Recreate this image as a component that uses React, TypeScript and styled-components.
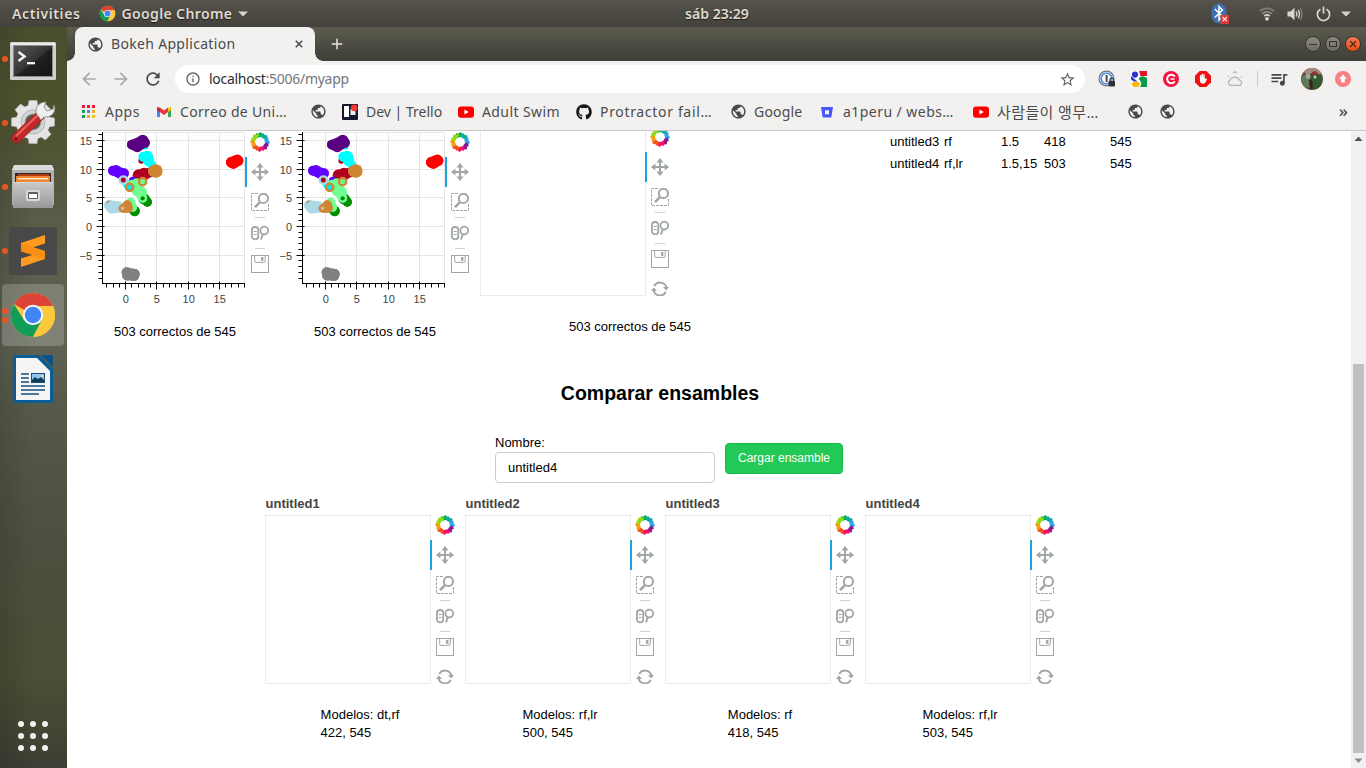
import React from "react";
import styled, { createGlobalStyle } from "styled-components";
import {
  MdAdd,
  MdArrowBack,
  MdArrowForward,
  MdInfoOutline,
  MdPublic,
  MdQueueMusic,
  MdRefresh,
  MdStarBorder,
} from "react-icons/md";
import { FaGithub } from "react-icons/fa";

const uiFont = `"Noto Sans", "Noto Sans CJK KR", sans-serif`;
const pageFont = `"Liberation Sans", Arial, sans-serif`;

const GlobalStyle = createGlobalStyle`
  * { box-sizing: border-box; }
  html, body { margin: 0; padding: 0; overflow: hidden; background: #fff; }
  svg { display: block; flex: none; }
`;

/* ---------- desktop shell ---------- */

const Desktop = styled.div`
  width: 1366px;
  height: 768px;
  display: flex;
  flex-direction: column;
  overflow: hidden;
  font-family: ${uiFont};
`;

const SystemBar = styled.header`
  height: 27px;
  flex: none;
  display: grid;
  grid-template-columns: 673px 1fr auto;
  align-items: center;
  background: linear-gradient(#57534b, #42413b);
  color: #dfdbd2;
  text-shadow: 0 1px 1px rgba(0, 0, 0, 0.6);
`;

const SystemGroup = styled.div`
  display: flex;
  align-items: center;
  height: 27px;
`;

const SystemText = styled.span<{ $left?: number; $space?: number }>`
  font-size: 14px;
  font-weight: 600;
  line-height: 26px;
  white-space: pre;
  margin-left: ${(p) => p.$left ?? 0}px;
  letter-spacing: ${(p) => p.$space ?? 0}px;
`;

const SystemIcon = styled.span<{ $left: number }>`
  margin-left: ${(p) => p.$left}px;
`;

const Workspace = styled.div`
  flex: 1;
  min-height: 0;
  display: flex;
`;

const Dock = styled.nav`
  width: 67px;
  flex: none;
  display: flex;
  flex-direction: column;
  justify-content: space-between;
  background:
    radial-gradient(90px 130px at 70% 8%, rgba(72, 80, 28, 0.5), transparent),
    linear-gradient(90deg, rgba(0, 0, 0, 0.12), transparent 50%),
    linear-gradient(#4a4d34 0%, #515439 12%, #5b5e4b 30%, #5f6353 42%, #55594a 52%, #4b5040 70%, #4a4e34 88%, #3c4034 100%);
`;

const DockList = styled.div`
  display: flex;
  flex-direction: column;
`;

const DockItem = styled.div<{ $active?: boolean }>`
  height: 62px;
  margin: 1px 3px 1px 2px;
  display: flex;
  align-items: center;
  border-radius: 4px;
  background: ${(p) => (p.$active ? "rgba(255,255,255,0.2)" : "transparent")};
`;

const Dots = styled.span`
  width: 7px;
  display: flex;
  flex-direction: column;
  gap: 3px;
`;

const Dot = styled.i`
  width: 6px;
  height: 6px;
  border-radius: 50%;
  background: #ea5420;
`;

const AppGrid = styled.div`
  display: grid;
  grid-template-columns: repeat(3, 6px);
  gap: 6px;
  padding: 0 0 17px 18px;
`;

const AppGridDot = styled.i`
  width: 6px;
  height: 6px;
  border-radius: 50%;
  background: #f1f1ef;
`;

/* ---------- browser ---------- */

const Browser = styled.main`
  flex: 1;
  min-width: 0;
  display: flex;
  flex-direction: column;
`;

const TabStrip = styled.div`
  height: 34px;
  flex: none;
  display: flex;
  align-items: center;
  padding-left: 8px;
  background: linear-gradient(#5c5b4e, #3f3e38);
`;

const Tab = styled.div`
  position: relative;
  width: 240px;
  height: 34px;
  display: flex;
  align-items: center;
  padding: 0 12px 0 12px;
  border-radius: 8px 8px 0 0;
  background: #f2f1f0;
  color: #494a4c;

  &::before,
  &::after {
    content: "";
    position: absolute;
    bottom: 0;
    width: 8px;
    height: 8px;
  }
  &::before {
    left: -8px;
    background: radial-gradient(circle at 0 0, transparent 7.5px, #f2f1f0 8px);
  }
  &::after {
    right: -8px;
    background: radial-gradient(circle at 100% 0, transparent 7.5px, #f2f1f0 8px);
  }
`;

const TabTitle = styled.span`
  flex: 1;
  margin: -2px 0 0 7px;
  font-size: 14px;
  letter-spacing: 0.32px;
  white-space: nowrap;
`;

const NewTab = styled.div`
  margin-left: 13px;
  color: #e6e4de;
`;

const WindowButtons = styled.div`
  margin-left: auto;
  padding-right: 5px;
  display: flex;
  gap: 4px;
`;

const WindowButton = styled.span<{ $close?: boolean }>`
  width: 16px;
  height: 16px;
  border-radius: 50%;
  display: grid;
  place-items: center;
  color: #3c3b37;
  border: 1px solid #35342f;
  background: ${(p) => (p.$close ? "linear-gradient(#f67c52, #e84a12)" : "linear-gradient(#8b897f, #6e6d64)")};
`;

const Toolbar = styled.div`
  height: 36px;
  flex: none;
  display: flex;
  align-items: center;
  background: #f2f1f0;
  padding-left: 12px;
`;

const NavButtons = styled.div`
  width: 96px;
  display: flex;
  gap: 12px;
`;

const Omnibox = styled.div`
  width: 910px;
  height: 28px;
  border-radius: 14px;
  background: #fff;
  display: flex;
  align-items: center;
  padding: 0 9px 0 10px;
  color: #5f6368;
`;

const Url = styled.span`
  flex: 1;
  margin-left: 8px;
  font-size: 14px;
  line-height: 28px;
  letter-spacing: -0.28px;
  color: #75777a;
`;

const UrlHost = styled.span`
  color: #2c2d30;
`;

const Extensions = styled.div`
  display: flex;
  align-items: center;
  gap: 16px;
  margin-left: 14px;
`;

const ExtensionSlot = styled.span`
  width: 16px;
  display: flex;
  justify-content: center;
`;

const BrowserMenu = styled.div`
  display: flex;
  align-items: center;
  gap: 12px;
  margin-left: -2px;
`;

const Separator = styled.i`
  width: 1px;
  height: 16px;
  margin-right: -1px;
  background: #cbcac9;
`;

const Bookmarks = styled.div`
  height: 34px;
  flex: none;
  display: flex;
  align-items: center;
  padding: 0 0 4px 14px;
  background: #f2f1f0;
  border-bottom: 1px solid #cbcac9;
  color: #4b4c4e;
`;

const Bookmark = styled.div<{ $width: number }>`
  width: ${(p) => p.$width}px;
  flex: none;
  display: flex;
  align-items: center;
  gap: 8px;
`;

const BookmarkIcon = styled.span`
  width: 16px;
  display: flex;
  justify-content: center;
`;

const BookmarkLabel = styled.span<{ $space: number; $size: number }>`
  font-size: ${(p) => p.$size}px;
  line-height: 20px;
  white-space: nowrap;
  letter-spacing: ${(p) => p.$space}px;
`;

const Overflow = styled.span`
  margin-left: auto;
  margin-right: 18px;
  font-size: 17px;
  font-weight: 500;
  line-height: 18px;
  padding-bottom: 2px;
`;

/* ---------- page ---------- */

const Viewport = styled.div`
  flex: 1;
  min-height: 0;
  display: flex;
  background: #fff;
`;

const Page = styled.div`
  flex: 1;
  min-width: 0;
  overflow: hidden;
  padding-left: 8px;
  font-family: ${pageFont};
  font-size: 13px;
  line-height: 18px;
  color: #000;
`;

const Scrollbar = styled.div`
  width: 15px;
  flex: none;
  display: flex;
  flex-direction: column;
  align-items: center;
  background: #f1f1f1;
`;

const ScrollArrow = styled.svg`
  width: 15px;
  height: 15px;
`;

const ScrollThumb = styled.i`
  width: 11px;
  height: 389px;
  margin: auto 0 0;
  background: #c1c1c1;
`;

const ResultsRow = styled.section`
  height: 242px;
  display: flex;
`;

const PlotColumn = styled.div<{ $width: number }>`
  width: ${(p) => p.$width}px;
  display: flex;
  flex-direction: column;
`;

const PlotBody = styled.div<{ $top: number; $left: number }>`
  display: flex;
  margin: ${(p) => p.$top}px 0 0 ${(p) => p.$left}px;
`;

const EmptyFrame = styled.div`
  width: 166px;
  height: 169px;
  margin-right: -1px;
  border: 1px solid #ebebeb;
`;

const PlotTools = styled.div<{ $height: number; $top: number }>`
  position: relative;
  width: 30px;
  height: ${(p) => p.$height}px;
  margin-top: ${(p) => p.$top}px;
  overflow: hidden;
  display: flex;
  flex-direction: column;
  align-items: center;
`;

const LogoSlot = styled.div`
  height: 25px;
  flex: none;
`;

const Tool = styled.div<{ $active?: boolean }>`
  width: 30px;
  height: 30px;
  flex: none;
  display: grid;
  place-items: center;
  padding-right: 2px;
  border-left: 2px solid ${(p) => (p.$active ? "#1ca4e0" : "transparent")};
`;

const ToolDivider = styled.i`
  width: 10px;
  height: 1px;
  flex: none;
  background: #cfd1d2;
`;

const Caption = styled.div<{ $top: number }>`
  margin: ${(p) => p.$top}px auto 0;
`;

const Table = styled.div`
  margin: 1px 0 0 105px;
  display: grid;
  grid-template-columns: 54px 57px 43px 66px 30px;
  grid-auto-rows: 22px;
  align-self: start;
  line-height: 20px;
`;

const Heading = styled.h2`
  width: 1170px;
  margin: 0;
  padding-top: 9px;
  text-align: center;
  font-size: 19.5px;
  line-height: 22px;
  font-weight: 700;
`;

const Form = styled.form`
  display: flex;
  margin: 30px 0 0 420px;
  height: 50px;
`;

const Field = styled.label`
  width: 220px;
  line-height: 17px;
`;

const Input = styled.input`
  display: block;
  width: 220px;
  height: 31px;
  margin-top: 1px;
  padding: 0 12px;
  border: 1px solid #ccc;
  border-radius: 4px;
  outline: none;
  background: #fff;
  color: #000;
  font: 13px ${pageFont};
`;

const LoadButton = styled.button`
  width: 118px;
  height: 31px;
  margin: 9px 0 0 10px;
  padding: 0 0 1px;
  border: 1px solid #12bb48;
  border-radius: 4px;
  background: #22c957;
  color: #fff;
  font: 12px ${pageFont};
`;

const CompareRow = styled.section`
  display: flex;
  margin-left: 185px;
  padding-top: 11px;
`;

const PlotTitle = styled.h3`
  margin: 0 0 2px 5.5px;
  font-size: 13px;
  line-height: 18px;
  font-weight: 700;
  color: #444;
`;

/* ---------- drawings ---------- */

const ChromeLogo = ({ size }: { size: number }) => (
  <svg width={size} height={size} viewBox="0 0 48 48">
    <circle cx="24" cy="24" r="22" fill="#fcc93c" />
    <path d="M24 24 L4.9 13 A22 22 0 0 1 43.1 13 L44 15 H24 Z" fill="#dc4437" />
    <path d="M4.9 13 A22 22 0 0 0 24 46 L33 29 L24 24 L15 29 Z" fill="#119d58" />
    <path d="M24 46 L33.2 28.5 L35 15 H44 A22 22 0 0 1 24 46Z" fill="#fcc93c" />
    <circle cx="24" cy="24" r="10.2" fill="#f4f6f8" />
    <circle cx="24" cy="24" r="8.2" fill="#4285f4" />
  </svg>
);

const TerminalIcon = () => (
  <svg width="48" height="48">
    <defs>
      <linearGradient id="term" x1="0" y1="0" x2="1" y2="1">
        <stop offset="0" stopColor="#5a5a5a" />
        <stop offset="0.5" stopColor="#343434" />
        <stop offset="0.55" stopColor="#1f1f1f" />
        <stop offset="1" stopColor="#151515" />
      </linearGradient>
    </defs>
    <rect x="1" y="7" width="46" height="38" rx="1.5" fill="#cfcfcf" />
    <rect x="2" y="8" width="44" height="3" fill="#ececec" />
    <rect x="4" y="10" width="40" height="32" fill="#8d8d8d" />
    <rect x="5" y="11" width="38" height="30" fill="url(#term)" />
    <path d="M9.5 17 L15.5 21.5 L9.5 26" fill="none" stroke="#f2f2f2" strokeWidth="2.6" />
    <path d="M18 28.2 h8" stroke="#fff" strokeWidth="2.2" />
  </svg>
);

const SettingsIcon = () => (
  <svg width="48" height="48">
    <g fill="#e4e4e4" stroke="#b9b9b9" strokeWidth="0.6">
      {[0, 45, 90, 135, 180, 225, 270, 315].map((a) => (
        <path key={a} d="M19 8 L20 1.5 H28 L29 8 Z" transform={`rotate(${a} 24 23)`} />
      ))}
    </g>
    <circle cx="24" cy="23" r="17.2" fill="#e4e4e4" />
    <circle cx="24" cy="23" r="12" fill="#d3d3d3" stroke="#b5b5b5" />
    <circle cx="24" cy="23" r="8" fill="#5b5d4c" stroke="#a5a5a5" />
    <path d="M3 37 L28 13 L35 19 L10 43 A4.8 4.8 0 0 1 3 37Z" fill="#c62828" stroke="#8d1919" strokeWidth="0.8" />
    <path d="M7 37 L29 16" stroke="#e4635c" strokeWidth="2" />
    <path d="M27 14 C26 7 31 3 37 3 L35 8 L38 12 L44 10 L45 6 C48 13 42 19 35 18 L32 21Z" fill="#efefef" stroke="#8b8b8b" strokeWidth="0.9" />
    <circle cx="7" cy="40" r="1.5" fill="#75110f" />
  </svg>
);

const FilesIcon = () => (
  <svg width="48" height="48">
    <defs>
      <linearGradient id="cab" x1="0" y1="0" x2="0" y2="1">
        <stop offset="0" stopColor="#c9c9c9" />
        <stop offset="1" stopColor="#989898" />
      </linearGradient>
    </defs>
    <path d="M5 2 H43 L45 7 V42 H3 V7Z" fill="#b3b3b3" />
    <path d="M5 2 H43 L45 7 H3Z" fill="#dcdcdc" />
    <rect x="6" y="10" width="36" height="10" fill="#2f2b28" />
    <rect x="9" y="11" width="31" height="3" fill="#b53a12" />
    <rect x="7" y="13" width="34" height="6" fill="#ee8734" />
    <rect x="9" y="15" width="30" height="1.4" fill="#ffe9cf" />
    <path d="M4 19 H44 V45 H4Z" fill="url(#cab)" />
    <path d="M4 19.5 H44" stroke="#d8d8d8" />
    <rect x="17" y="27" width="14" height="11" rx="2" fill="#d9d9d9" />
    <rect x="19" y="29" width="10" height="7" rx="1" fill="#5e5e5e" />
    <rect x="20" y="31" width="8" height="4" fill="#fff" />
  </svg>
);

const SublimeIcon = () => (
  <svg width="48" height="48">
    <rect width="48" height="48" rx="2" fill="#484848" />
    <path d="M12 16 L36 8 V16.5 L12 24Z" fill="#ff9b20" />
    <path d="M12 31.5 L36 24 V32 L12 40Z" fill="#ff9b20" />
    <path d="M12 16 L36 24 V32 L12 24.5Z" fill="#f99015" />
  </svg>
);

const WriterIcon = () => (
  <svg width="48" height="48">
    <path d="M6 0 H30 L44 14 V46 a2 2 0 0 1 -2 2 H6 a2 2 0 0 1 -2 -2 V2 a2 2 0 0 1 2 -2Z" fill="#0b5e95" />
    <path d="M7 3 H28 L41 16 V45 H7Z" fill="#f5f5f5" />
    <path d="M32 0 H42 a2 2 0 0 1 2 2 V12Z" fill="#08538a" />
    <g stroke="#14507c" strokeWidth="1.7">
      <path d="M12 19 h8 M12 23 h8 M12 27 h8 M12 31 h24 M12 35 h24 M12 39 h18" />
    </g>
    <rect x="22" y="18" width="14" height="10" fill="#14507c" />
    <rect x="23" y="19" width="12" height="8" fill="#8ec7ea" />
    <path d="M23 27 V25 L26 22 L29 24 L32 22 L35 25 V27Z" fill="#123c56" />
    <circle cx="33" cy="21" r="1.2" fill="#ffdf6b" />
  </svg>
);

const Triangle = () => (
  <svg width="10" height="6">
    <path d="M0 0.5 H10 L5 5.5Z" fill="#d6d3cb" />
  </svg>
);

const TabCloseIcon = () => (
  <svg width="8" height="8">
    <path d="M0.8 0.8 L7.2 7.2 M7.2 0.8 L0.8 7.2" stroke="#494a4c" strokeWidth="1.6" />
  </svg>
);

const BluetoothIcon = () => (
  <svg width="18" height="22">
    <rect x="0.5" y="0.5" width="15" height="20" rx="7.5" fill="#3c6fb0" />
    <path d="M3.8 6 L11.5 13.5 L8 17 V3.5 L11.5 7 L3.8 14.5" fill="none" stroke="#fff" strokeWidth="1.5" />
    <rect x="9.5" y="12" width="8.5" height="9" rx="1" fill="#e2383a" />
    <path d="M11.7 14.2 l4 4 m0 -4 l-4 4" stroke="#fff" strokeWidth="1.2" />
  </svg>
);

const WifiIcon = () => (
  <svg width="16" height="14" fill="none" strokeWidth="1.7">
    <path d="M1 4.2 A10 10 0 0 1 15 4.2" stroke="#827e76" />
    <path d="M3.2 6.8 A7 7 0 0 1 12.8 6.8" stroke="#8d8981" />
    <path d="M5.3 9.2 A4 4 0 0 1 10.7 9.2" stroke="#d8d5cd" />
    <circle cx="8" cy="11.8" r="1.9" fill="#d8d5cd" />
  </svg>
);

const VolumeIcon = () => (
  <svg width="16" height="14" fill="none" strokeWidth="1.4">
    <path d="M0.5 4.5 H3.5 L7.5 0.8 V13.2 L3.5 9.5 H0.5Z" fill="#d8d5cd" />
    <path d="M9.2 4.5 Q10.6 7 9.2 9.5" stroke="#d8d5cd" />
    <path d="M11.3 2.8 Q13.6 7 11.3 11.2" stroke="#d8d5cd" />
    <path d="M13.3 1 Q16.6 7 13.3 13" stroke="#827e76" />
  </svg>
);

const PowerIcon = () => (
  <svg width="15" height="16" fill="none" stroke="#d8d5cd" strokeWidth="1.7">
    <path d="M4.4 3.2 A6.1 6.1 0 1 0 10.6 3.2" />
    <path d="M7.5 0.5 V7.5" />
  </svg>
);

const AppsIcon = () => {
  const colors = ["#ea1a35", "#ea1a35", "#ea1a35", "#12a150", "#4285f4", "#f7a81b", "#12a150", "#f7a81b", "#f7c21b"];
  return (
    <svg width="16" height="16">
      {colors.map((c, i) => (
        <rect key={i} x={1 + (i % 3) * 5} y={1 + Math.floor(i / 3) * 5} width="3" height="3" fill={c} />
      ))}
    </svg>
  );
};

const GmailIcon = () => (
  <svg width="16" height="16">
    <path d="M1 4 V13 H4 V6Z" fill="#4285f4" />
    <path d="M15 4 V13 H12 V6Z" fill="#34a853" />
    <path d="M12 4.5 L15 2.6 V6 L12 8.3Z" fill="#fbbc04" />
    <path d="M1 3 L4 3.5 L8 6.6 L12 3.5 V8 L8 11 L1 6Z" fill="#ea3544" />
    <path d="M1 4 L4 5.5 V8.2 L1 6Z" fill="#b8204a" />
  </svg>
);

const TrelloIcon = () => (
  <svg width="16" height="16">
    <rect width="16" height="16" rx="1" fill="#14192e" />
    <rect x="2" y="2" width="5" height="11" fill="#fff" />
    <rect x="8.5" y="5" width="5" height="6" fill="#e9e9ee" />
    <circle cx="12.2" cy="3.8" r="3.4" fill="#f03a35" />
  </svg>
);

const YoutubeIcon = () => (
  <svg width="16" height="16">
    <rect x="0" y="2.4" width="16" height="11.4" rx="3" fill="#f00" />
    <path d="M6.4 5.6 L10.8 8.1 L6.4 10.6Z" fill="#fff" />
  </svg>
);

const BitbucketIcon = () => (
  <svg width="16" height="16">
    <path d="M2 3 H14 L12.3 13.5 H3.7Z" fill="#4457ff" />
    <rect x="6" y="6.3" width="4" height="4" fill="#f2f1f0" />
  </svg>
);

const PasswordIcon = () => (
  <svg width="18" height="18" viewBox="0 0 18 18">
    <circle cx="8.5" cy="8.5" r="7.4" fill="#fff" stroke="#74777b" strokeWidth="1.2" />
    <circle cx="8.5" cy="8.5" r="5.4" fill="none" stroke="#5b95e8" strokeWidth="1.9" />
    <rect x="7.6" y="5" width="2" height="7" fill="#4c4d50" />
    <rect x="10.5" y="11" width="6.5" height="5.5" rx="0.8" fill="#2f3033" />
    <path d="M12 11 V9.8 a1.8 1.8 0 0 1 3.6 0 V11" fill="none" stroke="#2f3033" strokeWidth="1.2" />
  </svg>
);

const GSquareIcon = () => (
  <svg width="16" height="16">
    <rect width="16" height="16" fill="#fff" />
    <path d="M8 0 H16 V5 H9.5Z" fill="#e8102c" />
    <path d="M9 6 Q12 4 16 7 V16 H9 Q12 12 7.6 8Z" fill="#0b9b46" />
    <circle cx="4" cy="3.6" r="3.1" fill="#2b33d4" />
    <path d="M0 5 L6.5 10.5 L3 10.5 L0 8.5Z" fill="#2b33d4" />
    <ellipse cx="4.8" cy="13.3" rx="4" ry="2.9" fill="#f5bb06" />
  </svg>
);

const CircleCIcon = () => (
  <svg width="16" height="16">
    <circle cx="8" cy="8" r="8" fill="#f4123f" />
    <path d="M11.8 5.6 A4.2 4.2 0 1 0 11.8 10.4" fill="none" stroke="#fff" strokeWidth="2" />
    <path d="M7.5 8 h4" stroke="#fff" strokeWidth="1.5" />
  </svg>
);

const BlockerIcon = () => (
  <svg width="16" height="16">
    <path d="M4.7 0 H11.3 L16 4.7 V11.3 L11.3 16 H4.7 L0 11.3 V4.7Z" fill="#f40d12" />
    <path d="M5.6 8 V4.8 M7.3 8 V3.4 M9 8 V3.6" stroke="#fff" strokeWidth="1.4" strokeLinecap="round" />
    <path d="M4.9 6.5 H9.7 V8.4 L11.4 7.2 L12 7.8 Q10.6 12.8 8.2 12.8 Q5 12.8 4.9 9.5Z" fill="#fff" />
  </svg>
);

const WeatherIcon = () => (
  <svg width="18" height="16" fill="none" stroke="#b5b4b3" strokeWidth="1.3">
    <path d="M4.5 14.4 a3 3 0 0 1 -0.2 -5.6 a4.7 4.2 0 0 1 8.8 0 a2.9 2.9 0 0 1 0.6 5.6Z" />
    <path d="M7.5 2.2 a1.5 1.3 0 0 1 3 0 M2 5.2 l1 0.7 M16 5.2 l-1 0.7" />
  </svg>
);

const AvatarIcon = () => (
  <svg width="22" height="22">
    <defs>
      <clipPath id="av">
        <circle cx="11" cy="11" r="11" />
      </clipPath>
    </defs>
    <g clipPath="url(#av)">
      <rect width="22" height="22" fill="#5c5047" />
      <path d="M0 0 H22 V5 L12 9 L5 6Z" fill="#a78782" />
      <path d="M9 6 L14 3 L20 8 L21 20 L11 22Z" fill="#33582b" />
      <path d="M0 9 L6 6 L10 11 L9 20 L2 18Z" fill="#5d7b57" />
      <circle cx="7" cy="8.5" r="2.4" fill="#a5a59c" />
      <path d="M11 4 L15 3 L16 7 L12 8Z" fill="#a02c33" />
      <circle cx="14" cy="9" r="1.5" fill="#c5cfbd" />
      <path d="M8 12 L11 11 L12 20 L9 22Z" fill="#3c211d" />
    </g>
  </svg>
);

const UpdateIcon = () => (
  <svg width="16" height="16">
    <circle cx="8" cy="8" r="8" fill="#f98080" />
    <path d="M8 3.5 L12 8 H9.8 V11.6 H6.2 V8 H4Z" fill="#fff" />
  </svg>
);

/* ---------- plot tools ---------- */

const toolGray = "#a1a6a9";

const BokehLogo = () => {
  const colors = ["#05b04c", "#11a8a0", "#2aa6e6", "#8e1790", "#f2116c", "#f4501c", "#fb9d12", "#90dc15"];
  return (
    <svg width="20" height="20" viewBox="-10 -10 20 20">
      {colors.map((c, i) => (
        <path
          key={c}
          d="M0.3 -10 L3.9 -7.2 L4.4 -5 L1.6 -5.2 L-2.2 -4.3 L-4.8 -5.6 L-3.6 -8.9 L-1.7 -8.3Z"
          fill={c}
          transform={`rotate(${i * 45})`}
        />
      ))}
    </svg>
  );
};

const PanIcon = () => (
  <svg width="18" height="18" fill={toolGray}>
    <path d="M8 3 H10 V15 H8Z M3 8 H15 V10 H3Z" />
    <path d="M9 0 L12.6 4.4 H5.4Z M9 18 L5.4 13.6 H12.6Z M0 9 L4.4 5.4 V12.6Z M18 9 L13.6 12.6 V5.4Z" />
  </svg>
);

const BoxZoomIcon = () => (
  <svg width="18" height="18" fill="none" stroke={toolGray}>
    <path d="M7 0.5 H0.5 V17.5 H17.5 V11" strokeDasharray="3 1" />
    <circle cx="12.4" cy="5.4" r="4.6" strokeWidth="2" />
    <path d="M9.2 8.8 L4 14.2" strokeWidth="2.6" />
  </svg>
);

const WheelZoomIcon = () => (
  <svg width="18" height="18" fill="none" stroke={toolGray}>
    <rect x="0.9" y="3" width="6.4" height="12.4" rx="3.2" strokeWidth="1.8" />
    <path d="M2.6 7.5 H5.8 M2.6 10.5 H5.8" strokeWidth="1" />
    <circle cx="13.3" cy="6.6" r="3.9" strokeWidth="1.8" />
    <path d="M11.8 10 L10 15.5" strokeWidth="2" />
  </svg>
);

const SaveIcon = () => (
  <svg width="18" height="18" fill="none" stroke={toolGray}>
    <rect x="0.5" y="0.5" width="17" height="17" />
    <path d="M3.7 0.5 V6.2 q0 1.2 1.2 1.2 H13 q1.2 0 1.2 -1.2 V0.5" />
    <rect x="10.4" y="2.5" width="1.6" height="3" fill={toolGray} strokeWidth="0.8" />
  </svg>
);

const ResetIcon = () => (
  <svg width="18" height="18" fill="none" stroke={toolGray} strokeWidth="1.9">
    <path d="M3.2 6 A6.6 6.6 0 0 1 15.4 7.6" />
    <path d="M14.8 12 A6.6 6.6 0 0 1 2.6 10.4" />
    <path d="M12 7 H18 L15.2 10.6Z M0 11 H6 L2.8 7.4Z" fill={toolGray} stroke="none" />
  </svg>
);

const PlotToolbar = ({ height, top = 0 }: { height: number; top?: number }) => (
  <PlotTools $height={height} $top={top}>
    <LogoSlot>
      <BokehLogo />
    </LogoSlot>
    <Tool $active>
      <PanIcon />
    </Tool>
    <Tool>
      <BoxZoomIcon />
    </Tool>
    <ToolDivider />
    <Tool>
      <WheelZoomIcon />
    </Tool>
    <ToolDivider />
    <Tool>
      <SaveIcon />
    </Tool>
    <Tool>
      <ResetIcon />
    </Tool>
  </PlotTools>
);

/* ---------- scatter plot ---------- */

const range = (from: number, to: number) => Array.from({ length: to - from + 1 }, (_, i) => from + i);
const px = (v: number) => Math.round(50.2 + v * 6.24) + 0.5;
const py = (v: number) => Math.round(94.9 - v * 5.74) + 0.5;

/* Each cluster is a colour and the centre and radius of its groups of points. */
const clusters: [string, [number, number, number][]][] = [
  ["#808080", [[176, 427, 15], [178, 436, 16], [198, 437, 16], [200, 432, 15]]],
  ["#ff0000", [[490, 97, 16], [496, 100, 16], [510, 92, 16], [508, 90, 16]]],
  ["#00ffff", [[232, 50, 9]]],
  ["#5b0082", [[191, 44, 14], [208, 52, 15], [230, 38, 16], [224, 31, 17]]],
  ["#b00020", [[220, 92, 9]]],
  ["#00ffff", [[226, 80, 15], [238, 79, 17], [242, 92, 17], [252, 105, 12]]],
  ["#00ffff", [[176, 163, 12]]],
  ["#b00020", [[212, 136, 18], [228, 131, 18], [244, 128, 15], [222, 146, 12]]],
  ["#d08533", [[258, 123, 18], [264, 123, 20]]],
  ["#6200ff", [[135, 122, 15], [144, 121, 16], [168, 130, 15], [160, 134, 14]]],
  ["#6200ff", [[194, 151, 11]]],
  ["#008f00", [[228, 206, 17], [238, 216, 14]]],
  ["#008f00", [[200, 243, 16]]],
  ["#70ff90", [[192, 166, 17], [206, 162, 17], [222, 186, 15], [224, 204, 13], [208, 182, 17]]],
  ["#70ff90", [[188, 217, 14], [194, 232, 13]]],
  ["#add8e6", [[124, 226, 16], [132, 234, 17], [152, 231, 17]]],
  ["#d08533", [[121, 217, 5]]],
  ["#add8e6", [[124, 221, 5]]],
  ["#d08533", [[178, 224, 13], [180, 234, 15], [168, 235, 13]]],
];

const rings: [number, number, number, string, string][] = [
  [164, 235, 9, "#d08533", "#c3c0b0"],
  [166, 150, 11, "#add8e6", "#b00020"],
  [185, 172, 11, "#d08533", "#00e6f0"],
  [224, 155, 11, "#d08533", "#70ff90"],
  [224, 205, 10, "#70ff90", "#008f00"],
];

const ScatterPlot = () => (
  <svg width="170" height="180" fontFamily={pageFont} fontSize="11" fill="#444">
    <g stroke="#e5e5e5">
      {[0, 5, 10, 15].map((v) => (
        <path key={v} d={`M${px(v)} 1 V152`} />
      ))}
      {[-5, 0, 5, 10, 15].map((v) => (
        <path key={v} d={`M28 ${py(v)} H170`} />
      ))}
      <path d="M28 1.5 H169.5 V152" fill="none" />
    </g>
    <g transform="scale(0.33333) translate(-21 -3)">
      {clusters.map(([color, points], i) => (
        <g key={i} fill={color}>
          <polygon
            points={points.map(([x, y]) => `${x},${y}`).join(" ")}
            stroke={color}
            strokeWidth={2 * Math.min(...points.map((p) => p[2]))}
            strokeLinejoin="round"
          />
          {points.map(([x, y, r], j) => (
            <circle key={j} cx={x} cy={y} r={r} />
          ))}
        </g>
      ))}
      {rings.map(([x, y, r, stroke, fill], i) => (
        <circle key={i} cx={x} cy={y} r={r} stroke={stroke} fill={fill} strokeWidth="7" />
      ))}
    </g>
    <g stroke="#000">
      <path d="M27.5 1 V153 M27 152.5 H170" fill="none" />
      {range(-9, 16).map((v) => (
        <path key={v} d={v % 5 ? `M23.5 ${py(v)} H27.5` : `M21.5 ${py(v)} H29.5`} />
      ))}
      {range(-3, 19).map((v) => (
        <path key={v} d={v % 5 ? `M${px(v)} 152.5 V156.5` : `M${px(v)} 150.5 V158.5`} />
      ))}
    </g>
    <g textAnchor="end">
      {[-5, 0, 5, 10, 15].map((v) => (
        <text key={v} x="17" y={py(v) + 4}>
          {String(v).replace("-", "−")}
        </text>
      ))}
    </g>
    <g textAnchor="middle">
      {[0, 5, 10, 15].map((v) => (
        <text key={v} x={px(v) + 0.2} y="172">
          {v}
        </text>
      ))}
    </g>
  </svg>
);

/* ---------- data ---------- */

const tableRows = [
  ["untitled3", "rf", "1.5", "418", "545"],
  ["untitled4", "rf,lr", "1.5,15", "503", "545"],
];

const ensembles = [
  { name: "untitled1", models: "dt,rf", score: "422, 545" },
  { name: "untitled2", models: "rf,lr", score: "500, 545" },
  { name: "untitled3", models: "rf", score: "418, 545" },
  { name: "untitled4", models: "rf,lr", score: "503, 545" },
];

const Globe = () => <MdPublic size={17} color="#48494b" />;

const bookmarks: { icon: React.ReactNode; label?: string; width: number; space?: number; size?: number }[] = [
  { icon: <AppsIcon />, label: "Apps", width: 75, space: 0.5 },
  { icon: <GmailIcon />, label: "Correo de Uni…", width: 154, space: 0.33 },
  { icon: <Globe />, width: 32 },
  { icon: <TrelloIcon />, label: "Dev | Trello", width: 116 },
  { icon: <YoutubeIcon />, label: "Adult Swim", width: 118, space: 0.4 },
  { icon: <FaGithub size={16} color="#191717" />, label: "Protractor fail…", width: 154, space: 0.67 },
  { icon: <Globe />, label: "Google", width: 89, space: 0.2 },
  { icon: <BitbucketIcon />, label: "a1peru / webs…", width: 154, space: 0.45 },
  { icon: <YoutubeIcon />, label: "사람들이 앵무…", width: 154, space: 0.4, size: 15 },
  { icon: <Globe />, width: 32 },
  { icon: <Globe />, width: 32 },
];

export default function App() {
  return (
    <Desktop>
      <GlobalStyle />
      <SystemBar>
        <SystemGroup>
          <SystemText $left={12} $space={0.6}>Activities</SystemText>
          <SystemIcon $left={19}>
            <ChromeLogo size={17} />
          </SystemIcon>
          <SystemText $left={5} $space={0.38}>Google Chrome</SystemText>
          <SystemIcon $left={6}>
            <Triangle />
          </SystemIcon>
        </SystemGroup>
        <SystemText $left={12} $space={0.05}>sáb 23:29</SystemText>
        <SystemGroup>
          <BluetoothIcon />
          <SystemIcon $left={30}>
            <WifiIcon />
          </SystemIcon>
          <SystemIcon $left={12}>
            <VolumeIcon />
          </SystemIcon>
          <SystemIcon $left={13}>
            <PowerIcon />
          </SystemIcon>
          <SystemIcon $left={10}>
            <Triangle />
          </SystemIcon>
          <SystemIcon $left={15} />
        </SystemGroup>
      </SystemBar>
      <Workspace>
        <Dock>
          <DockList>
            <DockItem>
              <Dots><Dot /></Dots>
              <TerminalIcon />
            </DockItem>
            <DockItem>
              <Dots><Dot /></Dots>
              <SettingsIcon />
            </DockItem>
            <DockItem>
              <Dots><Dot /></Dots>
              <FilesIcon />
            </DockItem>
            <DockItem>
              <Dots><Dot /></Dots>
              <SublimeIcon />
            </DockItem>
            <DockItem $active>
              <Dots><Dot /><Dot /></Dots>
              <ChromeLogo size={48} />
            </DockItem>
            <DockItem>
              <Dots />
              <WriterIcon />
            </DockItem>
          </DockList>
          <AppGrid>
            {range(1, 9).map((n) => (
              <AppGridDot key={n} />
            ))}
          </AppGrid>
        </Dock>
        <Browser>
          <TabStrip>
            <Tab>
              <MdPublic size={17} />
              <TabTitle>Bokeh Application</TabTitle>
              <TabCloseIcon />
            </Tab>
            <NewTab>
              <MdAdd size={18} />
            </NewTab>
            <WindowButtons>
              <WindowButton>
                <svg width="8" height="8"><path d="M0 4.5 H8" stroke="#34332e" /></svg>
              </WindowButton>
              <WindowButton>
                <svg width="8" height="8"><rect x="0.5" y="1.5" width="7" height="5" fill="none" stroke="#34332e" /></svg>
              </WindowButton>
              <WindowButton $close>
                <svg width="8" height="8"><path d="M1 1 L7 7 M7 1 L1 7" stroke="#3b2a22" strokeWidth="1.2" /></svg>
              </WindowButton>
            </WindowButtons>
          </TabStrip>
          <Toolbar>
            <NavButtons>
              <MdArrowBack size={20} color="#a9a9a9" />
              <MdArrowForward size={20} color="#a9a9a9" />
              <MdRefresh size={20} color="#48494b" />
            </NavButtons>
            <Omnibox>
              <MdInfoOutline size={16} />
              <Url>
                <UrlHost>localhost</UrlHost>:5006/myapp
              </Url>
              <MdStarBorder size={17} />
            </Omnibox>
            <Extensions>
              <ExtensionSlot><PasswordIcon /></ExtensionSlot>
              <ExtensionSlot><GSquareIcon /></ExtensionSlot>
              <ExtensionSlot><CircleCIcon /></ExtensionSlot>
              <ExtensionSlot><BlockerIcon /></ExtensionSlot>
              <ExtensionSlot><WeatherIcon /></ExtensionSlot>
              <BrowserMenu>
                <Separator />
                <MdQueueMusic size={20} color="#48494b" />
                <AvatarIcon />
                <UpdateIcon />
              </BrowserMenu>
            </Extensions>
          </Toolbar>
          <Bookmarks>
            {bookmarks.map((b, i) => (
              <Bookmark key={i} $width={b.width}>
                <BookmarkIcon>{b.icon}</BookmarkIcon>
                {b.label && (
                  <BookmarkLabel $space={b.space ?? 0} $size={b.size ?? 14}>
                    {b.label}
                  </BookmarkLabel>
                )}
              </Bookmark>
            ))}
            <Overflow>»</Overflow>
          </Bookmarks>
          <Viewport>
            <Page>
              <ResultsRow>
                {[0, 1].map((n) => (
                  <PlotColumn key={n} $width={200}>
                    <PlotBody $top={0} $left={0}>
                      <ScatterPlot />
                      <PlotToolbar height={152} top={1} />
                    </PlotBody>
                    <Caption $top={12}>503 correctos de 545</Caption>
                  </PlotColumn>
                ))}
                <PlotColumn $width={310}>
                  <PlotBody $top={-4} $left={5}>
                    <EmptyFrame />
                    <PlotToolbar height={169} />
                  </PlotBody>
                  <Caption $top={22}>503 correctos de 545</Caption>
                </PlotColumn>
                <Table>
                  {tableRows.flat().map((cell, i) => (
                    <span key={i}>{cell}</span>
                  ))}
                </Table>
              </ResultsRow>
              <Heading>Comparar ensambles</Heading>
              <Form onSubmit={(e) => e.preventDefault()}>
                <Field>
                  Nombre:
                  <Input defaultValue="untitled4" />
                </Field>
                <LoadButton type="button">Cargar ensamble</LoadButton>
              </Form>
              <CompareRow>
                {ensembles.map((e) => (
                  <PlotColumn key={e.name} $width={200}>
                    <PlotTitle>{e.name}</PlotTitle>
                    <PlotBody $top={0} $left={5}>
                      <EmptyFrame />
                      <PlotToolbar height={169} />
                    </PlotBody>
                    <Caption $top={22}>
                      Modelos: {e.models}
                      <br />
                      {e.score}
                    </Caption>
                  </PlotColumn>
                ))}
              </CompareRow>
            </Page>
            <Scrollbar>
              <ScrollArrow>
                <path d="M3.5 10 L7.5 5.5 L11.5 10Z" fill="#505050" />
              </ScrollArrow>
              <ScrollThumb />
              <ScrollArrow>
                <path d="M3.5 5.5 L7.5 10 L11.5 5.5Z" fill="#8a8a8a" />
              </ScrollArrow>
            </Scrollbar>
          </Viewport>
        </Browser>
      </Workspace>
    </Desktop>
  );
}
